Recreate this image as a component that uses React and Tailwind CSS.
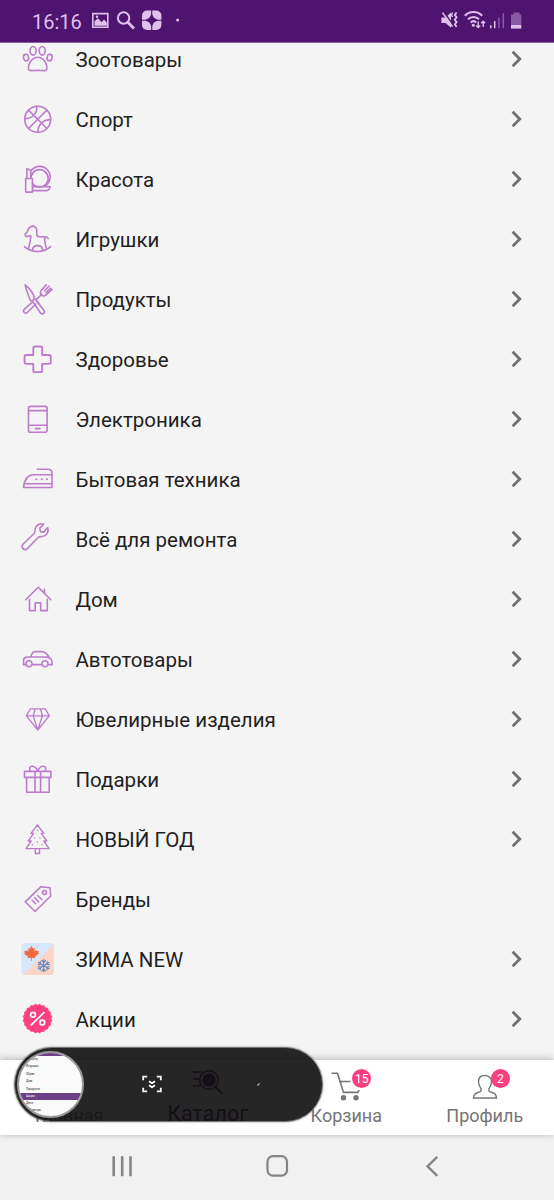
import React from 'react'

const icons = {
  paw: (
    <>
      <ellipse cx="8" cy="17.6" rx="2.5" ry="3.3" transform="rotate(-12 8 17.6)" />
      <ellipse cx="15.1" cy="10.8" rx="3" ry="4.3" />
      <ellipse cx="24.2" cy="10.8" rx="3" ry="4.3" />
      <ellipse cx="31.6" cy="17.6" rx="2.5" ry="3.3" transform="rotate(12 31.6 17.6)" />
      <path d="M19.7 17.2c4 0 7 3 8.6 7.2 1.6 4.600.6 6.200-2.400 6.200-2.200 0-3.800-.2-6.200-.2s-4 .2-6.200.2c-3 0-4-1.600-2.400-6.200 1.600-4.200 4.600-7.200 8.600-7.200z" />
    </>
  ),
  ball: (
    <>
      <circle cx="19.7" cy="19.3" r="13" />
      <path d="M10.5 10.1l18.4 18.4M28.9 10.1L10.5 28.5M18.8 6.4c.6 7.3-4.6 12.2-12 12.4M32.7 19.6c-7.5 0-12.8 5-12.8 12.6" />
    </>
  ),
  beauty: (
    <>
      <path d="M7.7 18.5h6.7v13.600H7.700zM8.900 18.200V8.600l3.900 1.900v7.700" />
      <path d="M13.3 10.500a10.500 10.500 0 1 1 12.500 16M14.500 23.500a8.700 8.700 0 1 0-1.500-7" />
      <path d="M14.5 26.600H32c-.4 2.700-1.600 4-4 4H14.500" />
    </>
  ),
  horse: (
    <>
      <path d="M7 14.8c.2-1.4 2-2.2 2.5-3.6.6-2 1.200-3.800 3-4.200l1.300-.8c3.200-.5 5 1.800 5 4.600v3.500c0 1.700.9 2.500 2.600 2.500h5.500c1.500 0 2.600.2 3.300 1.700M7 14.800c.3 1.600 1.700 2 3 1.500 1.200-.4 1.800-.7 2.800-.6-.1 4.600-1.200 8.700-2.300 13M26.600 17.400c.1 3.800.7 7.200 1.800 11.200" />
      <path d="M6.500 26.600c6.500 6.500 19.500 6.500 26 0M14.300 30.600c.3-3.200 2.500-5 5.400-5s5 1.800 5.300 5" />
    </>
  ),
  food: (
    <>
      <path d="M7.200 4.800c4.600 3.800 8.300 8.500 9.300 13.400l9.600 12.200c1.400 2.200-1.400 4.500-3.400 2.800l-8.200-12-2.200-.8c-1.800-5.200-4.400-10.500-5.100-15.600zM14.700 21l1.800-2.800" />
      <path d="M18.600 19.400l5.200-5.200M14.400 22.200l-8 6.900c-2.300 2.500.8 5.600 3.200 3.200l8.200-8.300M20.800 23.400l-1.600-2" />
      <path d="M28.4 4.800l-5.300 5.800c-1 1.500-.8 3.200.3 4.300s2.900 1.400 4.300.3l6.400-5.800M30.900 6.200l-4.300 4.600M32.700 8.200l-4.600 4.300" />
    </>
  ),
  health: (
    <path strokeWidth="1.9" d="M17 6.500h5.500a1.700 1.700 0 0 1 1.700 1.700v6.800H31a1.800 1.800 0 0 1 1.800 1.800v5.300a1.800 1.800 0 0 1-1.800 1.800h-6.800v6.500a1.700 1.700 0 0 1-1.700 1.700H17a1.700 1.700 0 0 1-1.700-1.700v-6.500H8.400a1.800 1.800 0 0 1-1.800-1.800v-5.300a1.800 1.800 0 0 1 1.800-1.800h6.900V8.200A1.700 1.700 0 0 1 17 6.500z" />
  ),
  phone: (
    <>
      <rect x="10.5" y="6.4" width="18.6" height="25.8" rx="2" />
      <path d="M10.5 10.6h18.6M10.500 25.200h18.600M17.500 28.600h4.600" />
    </>
  ),
  iron: (
    <>
      <path d="M5.5 27.500c.8-8.200 4-12.700 10.500-12.700h18v12.700zM7 23.800h27M19.300 9.200h10.500c2.600 0 4.200 1.500 4.200 4v3" />
      <path strokeWidth="2" d="M18.3 19.200h.1M23.700 19.200h.1M29 19.200h.1" />
    </>
  ),
  wrench: (
    <path d="M25.700 4.200c-3.800-1.300-8.200 1-8.700 5.200-.1 1.500 0 2.700-.6 3.800L5 24.300c-2.700 3 1.300 7 4.200 4.400l11.200-11.500c1.200-.8 2.600-.5 4-.7 4.300-.5 6.800-5 5.300-9l-3.900 4.600-3.300-.5-.8-3.200z" />
  ),
  house: (
    <path d="M7.700 19.800L20.200 7.300l12.600 12.500M26.400 13V9.400M11.500 19.200v11.400h5.700v-7.700h5.500v7.700h6.600V19.200" />
  ),
  car: (
    <>
      <circle cx="11" cy="23.7" r="3" />
      <circle cx="27" cy="23.7" r="3" />
      <path d="M8 24.6H5.600v-4.200c0-2.600 1.700-3.400 4.400-3.400h17.500c4.400.2 6.700 2 6.700 6v1.600H30M14 24.600h10M12.500 17l2-4.200c.6-1 1.300-1.200 2.400-1.200h6.300c4.200 0 6.300 2.400 8.300 6.400" />
    </>
  ),
  diamond: (
    <path strokeWidth="1.3" d="M12.4 8.900h14.900l4 6.900L19.800 30 8.300 15.800zM8.300 15.800h23M19.800 30l-4.600-14.200 2-6.900M19.800 30l4.600-14.200-2-6.900" />
  ),
  gift: (
    <>
      <path d="M6.500 11.400h26.400v6H6.500zM8.600 17.400v14.800h22.600V17.400M17 11.400v20.800M22.600 11.400v20.800" />
      <path d="M19.700 11.200c-1.200-3.200-3.300-5-5.400-5-3.200 0-3.400 4-1.500 5.200M19.700 11.200c1.200-3.200 3.300-5 5.400-5 3.200 0 3.400 4 1.500 5.200" />
    </>
  ),
  tree: (
    <>
      <path strokeWidth="1.4" d="M19.4 5l6.400 8.400h-2.600l5.600 7.600h-3l5.200 7.600H8l5.200-7.600h-3l5.400-7.600H13zM17.300 28.600v4.900h4.200v-4.900" />
      <path strokeWidth="1.5" d="M19.500 10.500v.1M16.500 18v.1M22 18v.1M14.500 24.700v.1M19.500 22v.1M24 24.700v.1" />
    </>
  ),
  tag: (
    <>
      <path d="M22.8 6.800l9.200.9.700 8.300L17 31.500 7.200 21.800z" />
      <circle cx="26.400" cy="12.500" r="2" />
      <path d="M14.2 20.300l3.500 3.500M16.800 17.700l3.800 4.200M19.600 15.500l4.200 4" />
    </>
  ),
}

// pinked edge of the sale badge
const badgePoints = Array.from({ length: 40 }, (_, i) => {
  const r = i % 2 ? 14.6 : 13.5
  const a = (i * Math.PI) / 20
  return `${19.5 + r * Math.cos(a)},${18.6 + r * Math.sin(a)}`
}).join(' ')

function WinterIcon() {
  return (
    <svg viewBox="0 0 40 40" className="size-10">
      <rect x="3.3" y="3" width="32.4" height="32" rx="4" fill="#d6e6fb" />
      <path d="M35.7 4.500V31a4 4 0 0 1-4 4H5z" fill="#fbd5c9" />
      <path
        d="M13.5 5.800l1.700 2.900 1.700-.7-.5 3.600 2-1.600.5 1.200 2-.3-.7 2 .8.700-4 3.200.3 1.300-3.400-.4v3h-.8v-3l-3.400.4.400-1.300-4-3.200.8-.7-.7-2 2 .3.500-1.200 2 1.600-.5-3.600 1.600.7z"
        fill="#f26a3c"
      />
      <g stroke="#5c86c0" strokeWidth="1.1" strokeLinecap="round" fill="none">
        {[0, 60, 120, 180, 240, 300].map((deg) => (
          <path key={deg} transform={`rotate(${deg} 25.7 25.7)`} d="M25.700 25.700v-6.200M23.800 20.500l1.900 1.900 1.900-1.900" />
        ))}
      </g>
    </svg>
  )
}

function SaleIcon() {
  return (
    <svg viewBox="0 0 40 40" className="size-10" fill="none" stroke="#fff" strokeWidth="1.7" strokeLinecap="round">
      <polygon points={badgePoints} fill="#fb3f7f" stroke="#fb3f7f" strokeWidth=".6" />
      <circle cx="15" cy="14.7" r="2.4" />
      <circle cx="24.300" cy="22.6" r="2.4" />
      <path d="M26 12.500L13.300 24.900" />
    </svg>
  )
}

const categories = [
  { title: 'Зоотовары', icon: 'paw' },
  { title: 'Спорт', icon: 'ball' },
  { title: 'Красота', icon: 'beauty' },
  { title: 'Игрушки', icon: 'horse' },
  { title: 'Продукты', icon: 'food' },
  { title: 'Здоровье', icon: 'health' },
  { title: 'Электроника', icon: 'phone' },
  { title: 'Бытовая техника', icon: 'iron' },
  { title: 'Всё для ремонта', icon: 'wrench' },
  { title: 'Дом', icon: 'house' },
  { title: 'Автотовары', icon: 'car' },
  { title: 'Ювелирные изделия', icon: 'diamond' },
  { title: 'Подарки', icon: 'gift' },
  { title: 'НОВЫЙ ГОД', icon: 'tree' },
  { title: 'Бренды', icon: 'tag', noArrow: true },
  { title: 'ЗИМА NEW', icon: 'winter' },
  { title: 'Акции', icon: 'sale' },
]

function CategoryIcon({ name }) {
  if (name === 'winter') return <WinterIcon />
  if (name === 'sale') return <SaleIcon />
  return (
    <svg
      viewBox="0 0 40 40"
      className="size-10"
      fill="none"
      stroke="#bd7bcb"
      strokeWidth="1.6"
      strokeLinecap="round"
      strokeLinejoin="round"
    >
      {icons[name]}
    </svg>
  )
}

function CategoryRow({ title, icon, noArrow }) {
  return (
    <li className="flex h-[60px] shrink-0 items-center pr-[30px] pl-[18px]">
      <CategoryIcon name={icon} />
      <span className="ml-[17.5px] flex-1 text-[20.5px] leading-6 text-[#1f1f1f]">{title}</span>
      {!noArrow && (
        <svg viewBox="0 0 16 20" className="mb-0.5 h-5 w-4" fill="none" stroke="#717171" strokeWidth="2.8">
          <path d="M4.600 2.800l7.200 7.200-7.200 7.200" />
        </svg>
      )}
    </li>
  )
}

function StatusBar() {
  return (
    <header className="flex h-[43px] items-center justify-between border-b border-[#8d58a6] bg-[#4e146f] pr-[30px] pl-8">
      <div className="flex items-center text-[#dfc0ec]">
        <span className="w-[50px] pt-px text-[20px] leading-6">16:16</span>
        <svg viewBox="0 0 104 24" className="ml-2 h-6 w-[104px]" fill="none" stroke="currentColor">
          <path strokeWidth="1.6" d="M2.800 4.600h15v13.600h-15z" />
          <path fill="currentColor" stroke="none" d="M4.500 16.700v-4.500l3.500-3 3.500 4 2.600-2.700 2.700 3v3.200z" />
          <circle cx="7" cy="7.7" r="1.2" fill="currentColor" stroke="none" />
          <circle cx="33.600" cy="9" r="5.7" strokeWidth="2" />
          <path strokeWidth="2.8" d="M37.800 13.200l6.200 6.200" />
          <rect x="52" y="1.5" width="19.4" height="19.4" rx="5" fill="currentColor" stroke="none" />
          <path
            d="M61.700 5.200q1 5 6 6-5 1-6 6-1-5-6-6 5-1 6-6zM61.700 1v5M61.700 16.500v5M51.500 11.200h5M66.500 11.200h5.500"
            fill="#4e146f"
            stroke="#4e146f"
            strokeWidth="1.1"
          />
          <circle cx="87.600" cy="11" r="1.5" fill="currentColor" stroke="none" />
        </svg>
      </div>
      <svg viewBox="0 0 84 24" className="h-6 w-[84px]" fill="none" stroke="#dfc0ec">
        <path fill="#dfc0ec" stroke="none" d="M1.400 8.500h4.200l5.400-5v15.200l-5.400-4.800H1.400z" />
        <path stroke="#4e146f" strokeWidth="1.4" d="M4 3.200l10.300 14.300" />
        <path strokeWidth="1.6" d="M2.500 3.600l10 14" />
        <path strokeWidth="1.8" d="M16.600 3.500l-1.800 2.400 1.800 2.400-1.800 2.400 1.800 2.400-1.800 2.400 1.800 2.400" />
        <path strokeWidth="1.4" d="M12.600 3.500l-1.200 2.200 1.200 2.300" />
        <path strokeWidth="2" d="M24.800 6.800c4.800-5 12.600-5 17.400 0M28 10.300c3-3.100 8-3.100 11 0M30.700 13.400c1.700-1.500 4-1.500 5.600 0" />
        <circle cx="33.300" cy="16.300" r="1.5" fill="#dfc0ec" stroke="none" />
        <path strokeWidth="1.4" d="M38.200 12.500v5.800M36.200 16.500l2 2 2-2M43.200 18v-5.800M41.200 14.200l2-2 2 2" />
        <path strokeWidth="1.5" d="M50.800 16.200v3M54.700 12v7.200" />
        <path stroke="#8a58a5" strokeWidth="1.500" d="M58.900 8.500v10.700M63.300 4.200v15" />
        <path fill="#8a58a5" stroke="none" d="M73.500 3.500h6v2h1.800v11.300h-10.300V5.500h2.500z" />
        <path fill="#dfc0ec" stroke="none" d="M71 16h10.300v3.600H71z" />
      </svg>
    </header>
  )
}

function Badge({ children }) {
  return (
    <span className="absolute -top-[1px] left-[22px] flex size-[19px] items-center justify-center rounded-full bg-[#fb3f7f] text-[12px] text-white">
      {children}
    </span>
  )
}

function TabBar() {
  return (
    <nav className="relative z-10 grid h-[75px] shrink-0 grid-cols-4 bg-white text-[18px] leading-6 text-[#757575] shadow-[0_-1px_7px_rgba(0,0,0,0.28)]">
      <div className="flex flex-col items-center pt-11">
        <span>Главная</span>
      </div>
      <div className="flex flex-col items-center pt-2 text-[#4e146f]">
        <svg viewBox="0 0 32 28" className="h-7 w-8" fill="none" stroke="currentColor" strokeWidth="1.5">
          <path d="M1 4h9M1 10.700h6M1 17.700h8" />
          <circle cx="17" cy="12" r="9.3" />
          <circle cx="17" cy="12" r="6" fill="currentColor" />
          <path strokeWidth="2" d="M23 18.500l7.500 7.500" />
        </svg>
        <span className="mt-[6px] text-[21.5px]">Каталог</span>
      </div>
      <div className="flex flex-col items-center pt-2.5">
        <div className="relative h-[34px] w-8">
          <svg viewBox="0 0 32 32" className="size-8" fill="none" stroke="currentColor" strokeWidth="1.6">
            <path d="M1.500 3.200h6l6 19.200h14.200l1.500-2.300M9 11.500h11.500" />
            <circle cx="13.500" cy="27.700" r="2.7" fill="currentColor" stroke="none" />
            <circle cx="26" cy="27.700" r="2.7" fill="currentColor" stroke="none" />
          </svg>
          <Badge>15</Badge>
        </div>
        <span>Корзина</span>
      </div>
      <div className="flex flex-col items-center pt-2.5">
        <div className="relative h-[34px] w-8">
          <svg viewBox="0 0 32 32" className="size-8" fill="none" stroke="currentColor" strokeWidth="1.4">
            <path d="M15.500 5.500c-4 0-6 2.600-6 6.300 0 2.200.7 4.500 2.200 6.300.8 1.200.6 3-.5 3.600L7.700 23c-2.300.8-3 2.300-3.200 5h23c-.2-2.700-.9-4.200-3.200-5l-3.500-1.300c-1.100-.6-1.300-2.400-.5-3.600 1.500-1.800 2.200-4.100 2.200-6.300 0-3.700-2.500-6.300-7-6.300z" />
          </svg>
          <Badge>2</Badge>
        </div>
        <span>Профиль</span>
      </div>
    </nav>
  )
}

const previewRows = ['Красота', 'Игрушки', 'Обувь', 'Дом', 'Продукты']

// scroll capture toolbar that floats over the tabs
function CaptureBar() {
  return (
    <div className="absolute top-[1047px] left-[14px] z-20 flex h-[75px] w-[309px] items-center rounded-full border border-[#777] bg-[#0e0e0e]/90 shadow-[0_0_2px_rgba(0,0,0,0.5)]">
      <div className="ml-[2px] flex size-[67px] shrink-0 flex-col overflow-hidden rounded-full border-2 border-[#999] bg-[#fafafa] text-[3px] leading-[7.4px] text-[#222]">
        <div className="h-[3px] shrink-0 bg-[#6d4086]" />
        {previewRows.map((row) => (
          <div key={row} className="h-[7.4px] shrink-0 pl-[7px]">{row}</div>
        ))}
        <div className="h-[7px] shrink-0 bg-[#6d4086] pl-[7px] text-white">Акции</div>
        <div className="h-[7.4px] shrink-0 pl-[7px]">Дети</div>
        <div className="h-[7.4px] shrink-0 pl-[10px]">Электро</div>
      </div>
      <svg viewBox="0 0 20 18" className="mb-px ml-[58px] h-[18px] w-5" fill="none" stroke="#fff" strokeWidth="1.8">
        <path d="M1.200 5.200v-3.500h4M14.800 1.700h4v3.500M18.800 12.800v3.500h-4M5.200 16.300h-4v-3.500" />
        <path strokeWidth="1.700" d="M7 6.300l3 2 3-2M7 10.300l3 2 3-2" />
      </svg>
      <span className="ml-[96px] h-[3px] w-px rotate-45 bg-[#c4c4c4]" />
    </div>
  )
}

function SystemNav() {
  return (
    <footer className="flex h-[65px] shrink-0 items-center justify-between bg-[#f1f1f1] px-[110px] pb-[3px] text-[#858585]">
      <svg viewBox="0 0 24 24" className="size-6" stroke="currentColor" strokeWidth="2.6">
        <path d="M3.700 2.300v20M12.200 2.300v20M20.500 2.300v20" />
      </svg>
      <svg viewBox="0 0 24 24" className="-ml-px size-6" fill="none" stroke="currentColor" strokeWidth="2.2">
        <rect x="2.500" y="2.200" width="19.500" height="19.500" rx="5.5" />
      </svg>
      <svg viewBox="0 0 24 24" className="size-6" fill="none" stroke="currentColor" strokeWidth="2.4">
        <path d="M17.300 2.800l-9.800 9.500 9.800 9.500" />
      </svg>
    </footer>
  )
}

export default function App() {
  return (
    <div className="relative flex h-[1200px] w-[554px] flex-col overflow-hidden bg-[#f4f4f4] font-['Roboto','Noto_Sans',sans-serif]">
      <StatusBar />
      <main className="min-h-0 flex-1 overflow-hidden">
        <ul className="-mt-[13px] flex flex-col">
          {categories.map((c) => (
            <CategoryRow key={c.title} {...c} />
          ))}
        </ul>
      </main>
      <TabBar />
      <CaptureBar />
      <SystemNav />
    </div>
  )
}
